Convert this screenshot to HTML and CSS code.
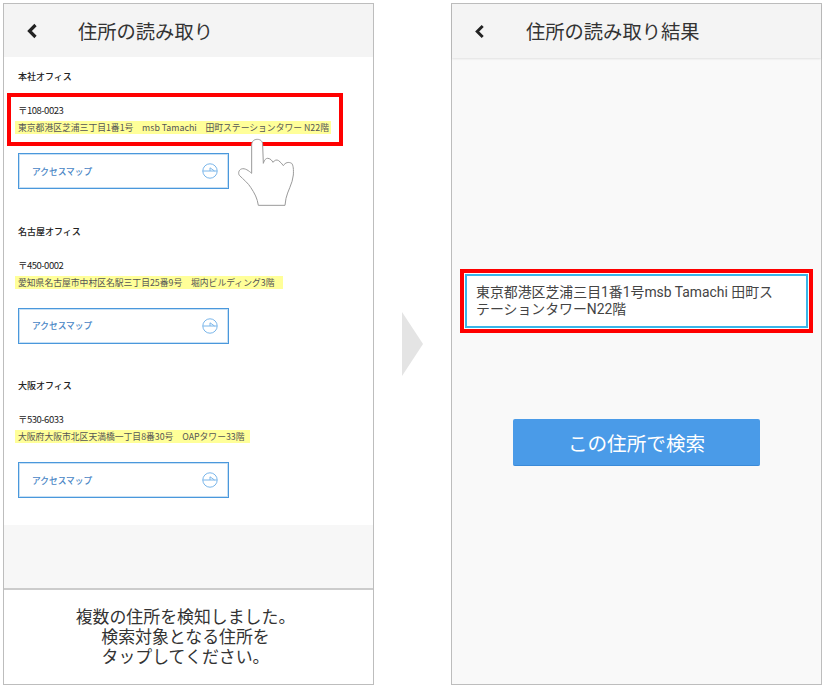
FILE: index.html
```html
<!DOCTYPE html>
<html lang="ja">
<head>
<meta charset="utf-8">
<title>住所の読み取り</title>
<link rel="stylesheet" href="styles.css">
</head>
<body>
<main class="stage">
  <section class="phone">
    <header class="bar">
      <svg class="back" viewBox="0 0 12 16"><path d="M9.5 2 3.5 8l6 6"/></svg>
      <h1 class="bar-title">住所の読み取り</h1>
    </header>
    <div class="offices">
      <article class="office">
        <h2 class="office-name">本社オフィス</h2>
        <p class="postal">〒108-0023</p>
        <p class="addr addr-picked"><span class="mark">東京都港区芝浦三丁目1番1号　msb Tamachi　田町ステーションタワー N22階</span></p>
        <a class="map-btn"><span>アクセスマップ</span><svg class="map-ico" viewBox="0 0 16 16"><circle cx="8" cy="8" r="7.2"/><path d="M0.8 8H15M8 8V4.8L12.5 8"/></svg></a>
        <svg class="hand" viewBox="171 21 180 216"><path d="M215 130V45C215 33 223 28 232 28S248 33 248 45L250 100C253 90 258 84 264 85 272 86 276 92 279 97 284 90 290 88 296 92 302 96 306 102 310 107 316 97 326 95 335 100 340 105 341 120 340 135 338 160 322 185 318 205L315 226H235C232 205 224 190 212 172 205 160 190 148 178 136 174 130 176 120 184 117 195 113 207 123 215 130Z"/></svg>
      </article>
      <article class="office">
        <h2 class="office-name">名古屋オフィス</h2>
        <p class="postal">〒450-0002</p>
        <p class="addr"><span class="mark mark-wide">愛知県名古屋市中村区名駅三丁目25番9号　堀内ビルディング3階</span></p>
        <a class="map-btn"><span>アクセスマップ</span><svg class="map-ico" viewBox="0 0 16 16"><circle cx="8" cy="8" r="7.2"/><path d="M0.8 8H15M8 8V4.8L12.5 8"/></svg></a>
      </article>
      <article class="office">
        <h2 class="office-name">大阪オフィス</h2>
        <p class="postal">〒530-6033</p>
        <p class="addr"><span class="mark mark-mid">大阪府大阪市北区天満橋一丁目8番30号　OAPタワー33階</span></p>
        <a class="map-btn"><span>アクセスマップ</span><svg class="map-ico" viewBox="0 0 16 16"><circle cx="8" cy="8" r="7.2"/><path d="M0.8 8H15M8 8V4.8L12.5 8"/></svg></a>
      </article>
    </div>
    <div class="spacer"></div>
    <p class="hint">複数の住所を検知しました。<br>検索対象となる住所を<br>タップしてください。</p>
  </section>

  <div class="next-arrow"></div>

  <section class="phone phone-result">
    <header class="bar bar-shadow">
      <svg class="back back-small" viewBox="0 0 12 16"><path d="M9.5 2 3.5 8l6 6"/></svg>
      <h1 class="bar-title">住所の読み取り結果</h1>
    </header>
    <div class="result">
      <div class="field-ring">
        <div class="field">東京都港区芝浦三目1番1号msb Tamachi 田町ステーションタワーN22階</div>
      </div>
      <button class="search-btn">この住所で検索</button>
    </div>
  </section>
</main>
</body>
</html>
```
FILE: styles.css
```css
*, *::before, *::after { box-sizing: border-box; }
html, body { margin: 0; padding: 0; background: #fff; }
body { font-family: "Noto Sans CJK JP", "Noto Sans", sans-serif; color: #333; }
h1, h2, p { margin: 0; font-weight: 400; }

.stage { display: flex; align-items: flex-start; padding: 3px 0 0 3px; height: 689px; overflow: hidden; }

.phone { width: 371px; height: 682px; border: 1px solid #bdbdbd; background: #fff; display: flex; flex-direction: column; flex: none; }
.phone-result { background: #f9f9f9; }

.bar { height: 53px; flex: none; background: #f4f4f4; display: flex; align-items: center; padding-left: 22px; }
.bar-shadow { height: 54px; padding-left: 22px; box-shadow: 0 1px 2px rgba(0,0,0,.1); }
.bar-title { font-size: 19.3px; line-height: 26px; color: #333; margin-left: 40px; }
.phone-result .bar-title { margin-left: 41px; }

.back { width: 12px; height: 16px; fill: none; stroke: #222; stroke-width: 3.2; flex: none; }
.back-small { width: 11px; height: 15px; }

.offices { background: #fff; padding: 13px 0 18px 14px; flex: none; }
.office { position: relative; height: 154.5px; }
.office:last-child { height: 128px; }
.office-name { font-size: 9px; line-height: 14px; font-weight: 500; color: #222; }
.postal { font-size: 9.5px; line-height: 14px; margin-top: 19px; color: #222; letter-spacing: -.5px; }
.addr { font-size: 8.8px; line-height: 13px; margin: 4px 0 0 -3px; color: #555; white-space: nowrap; }
.mark { display: inline-block; background: #ffff99; padding: 0 2px 0 3px; height: 13px; }
.mark-wide { padding-right: 9px; }
.mark-mid { padding-right: 5px; }
.addr-picked::after { content: ""; position: absolute; left: -11px; top: 23px; width: 336px; height: 53px; border: 4px solid #f00; }

.map-btn { display: flex; align-items: center; justify-content: space-between; width: 211px; height: 36px; margin-top: 19px; border: 1px solid #4a98dc; box-shadow: inset 0 0 0 1px rgba(74,152,220,.3); padding: 0 10px 0 13px; font-size: 8.7px; font-weight: 500; color: #4a86c5; }
.map-ico { width: 16px; height: 16px; fill: none; stroke: #7ab6ea; stroke-width: 1; flex: none; }

.hand { position: absolute; left: 219px; top: 67px; width: 60px; height: 72px; fill: #fff; stroke: #9a9a9a; stroke-width: 3; stroke-linejoin: round; }

.spacer { flex: 1; background: #f7f7f7; }
.hint { height: 96px; flex: none; border-top: 2px solid #ccc; background: #fff; padding: 16px 6px 0 0; font-size: 16.9px; line-height: 20px; text-align: center; color: #333; }

.next-arrow { width: 21px; height: 64px; flex: none; margin: 309px 28px 0 28px; background: #e4e4e4; clip-path: polygon(0 0, 100% 50%, 0 100%); }

.result { flex: 1; padding: 211px 0 0 8px; }
.field-ring { width: 353px; height: 64px; border: 4px solid #f00; padding: 1px; background: #fff; }
.field { height: 100%; border: 2px solid #3ab5e8; background: #fff; padding: 8px 22px 0 9px; font-family: Roboto, "Noto Sans CJK JP", sans-serif; font-size: 13.9px; line-height: 17px; color: #444; }
.search-btn { display: block; width: 247px; height: 47px; margin: 86px 0 0 53px; border: 0; border-bottom: 1px solid #3a8ad8; border-radius: 2px; background: #4a9be8; color: #fff; font-family: "Noto Sans CJK JP", sans-serif; font-size: 19.6px; font-weight: 400; }
```
